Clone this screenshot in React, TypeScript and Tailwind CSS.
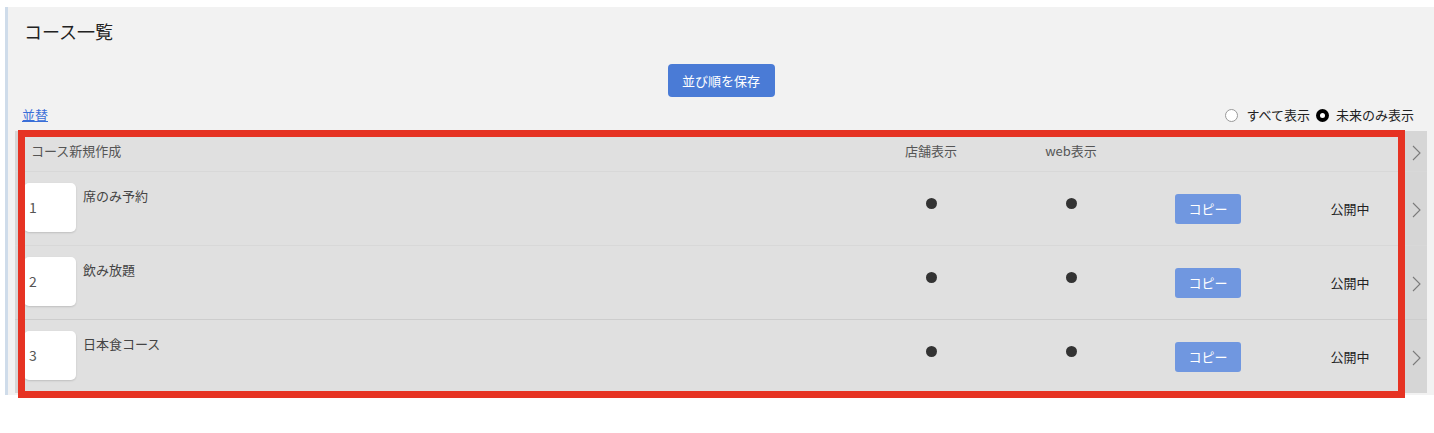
import React from 'react';

type Course = { id: number; order: number; name: string; store: boolean; web: boolean; status: string };

const courses: Course[] = [
  { id: 1, order: 1, name: '席のみ予約', store: true, web: true, status: '公開中' },
  { id: 2, order: 2, name: '飲み放題', store: true, web: true, status: '公開中' },
  { id: 3, order: 3, name: '日本食コース', store: true, web: true, status: '公開中' },
];

const Chevron = () => (
  <svg width="9" height="16" viewBox="0 0 9 16" fill="none">
    <path d="M1 1l7 7-7 7" stroke="#7a7a7a" strokeWidth="1.1" />
  </svg>
);

const Dot = () => <span className="mb-[10px] block h-[11px] w-[11px] rounded-full bg-[#333]" />;

export default function App() {
  return (
    <div className="relative min-h-[433px] bg-white pl-[5px] pt-[7px] font-['Noto_Sans_CJK_JP','Noto_Sans',sans-serif] text-[#333]">
      <div className="h-[388px] border-l-[3px] border-[#cfdcea] bg-[#f2f2f2] px-[7px]">
        <h1 className="pl-[9px] pt-[11px] text-[18px] leading-[26px] text-[#222]">コース一覧</h1>

        <div className="mt-[20px] flex justify-center">
          <button className="h-[33px] w-[107px] rounded-[4px] bg-[#4a7bd6] text-[13px] text-white">並び順を保存</button>
        </div>

        <div className="mt-[9px] flex h-[18px] items-center justify-between pl-[7px] pr-[13px] text-[13px]">
          <a className="text-[#3a6fd8] underline">並替</a>
          <div className="flex items-center text-[#222]">
            <span className="h-[13px] w-[13px] rounded-full border border-[#999] bg-white" />
            <span className="ml-[8px]">すべて表示</span>
            <span className="ml-[6px] flex h-[13px] w-[13px] items-center justify-center rounded-full bg-black">
              <span className="h-[5px] w-[5px] rounded-full bg-white" />
            </span>
            <span className="ml-[7px]">未来のみ表示</span>
          </div>
        </div>

        {/* 一覧テーブル */}
        <div className="mt-[7px] text-[13px]">
          <div className="flex h-[40px]">
            <div className="flex flex-1 items-center border-l-[3px] border-[#d6d6d6] bg-[#e0e0e0] text-[#555]">
              <div className="flex-1 pl-[13px]">コース新規作成</div>
              <div className="w-[140px] text-center">店舗表示</div>
              <div className="w-[140px] text-center">web表示</div>
              <div className="w-[154px]" />
              <div className="w-[110px]" />
            </div>
            <div className="flex w-[22px] items-center justify-center bg-[#d6d6d6] pt-[4px]">
              <Chevron />
            </div>
          </div>

          {courses.map((c, i) => (
            <div
              key={c.id}
              className={`flex h-[74px] border-t ${i === 2 ? 'border-[#cdcdcd]' : 'border-[#d8d8d8]'}`}
            >
              <div className="flex flex-1 items-center border-l-[3px] border-[#d6d6d6] bg-[#e0e0e0]">
                <div className="flex flex-1 items-start self-stretch">
                  <div className="ml-[6px] mt-[11px] flex h-[49px] w-[52px] items-center rounded-[5px] bg-white pl-[5px] text-[14px] text-[#555] shadow-[0_1px_2px_rgba(0,0,0,0.15)]">
                    {c.order}
                  </div>
                  <div className="ml-[7px] mt-[14px] text-[#444]">{c.name}</div>
                </div>
                <div className="flex w-[140px] justify-center">{c.store && <Dot />}</div>
                <div className="flex w-[140px] justify-center">{c.web && <Dot />}</div>
                <div className="w-[154px] pl-[34px]">
                  <button className="h-[30px] w-[66px] rounded-[3px] bg-[#7097e0] text-[13px] text-white">コピー</button>
                </div>
                <div className="w-[110px] text-center text-[#222]">{c.status}</div>
              </div>
              <div className="flex w-[22px] items-center justify-center bg-[#d6d6d6] pt-[3px]">
                <Chevron />
              </div>
            </div>
          ))}
        </div>
      </div>

      <div className="absolute left-[18px] top-[130px] h-[268px] w-[1387px] border-[7px] border-[#e63323]" />
    </div>
  );
}
